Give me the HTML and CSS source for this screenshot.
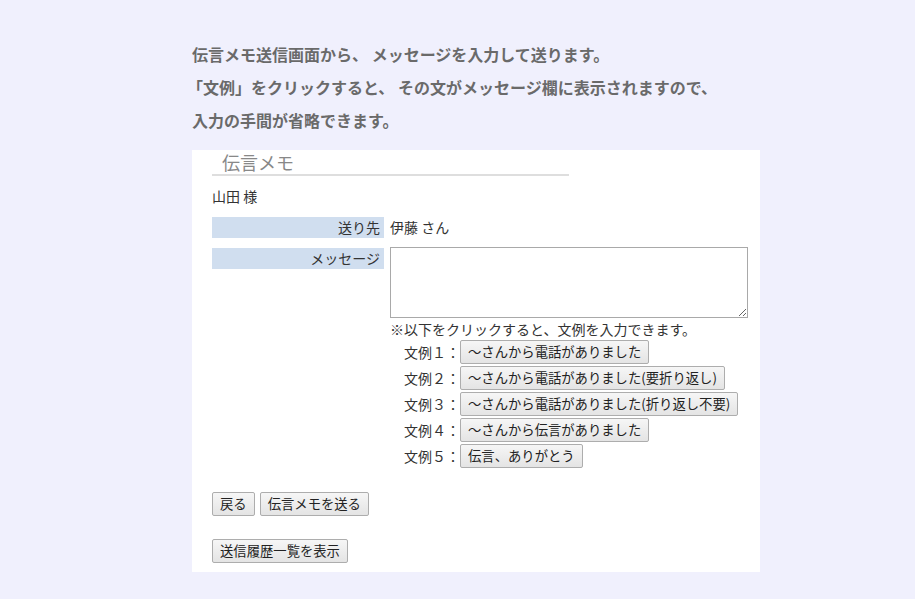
FILE: index.html
```html
<!DOCTYPE html>
<html lang="ja">
<head>
<meta charset="utf-8">
<link rel="stylesheet" href="styles.css">
</head>
<body>
<div class="page">
  <div class="intro">
    <p>伝言メモ送信画面から、 メッセージを入力して送ります。</p>
    <p class="bracket">「文例」をクリックすると、 その文がメッセージ欄に表示されますので、</p>
    <p>入力の手間が省略できます。</p>
  </div>
  <div class="card">
    <div class="title">伝言メモ</div>
    <div class="user">山田 様</div>
    <div class="row">
      <div class="label">送り先</div>
      <div class="value">伊藤 さん</div>
    </div>
    <div class="row msg">
      <div class="label">メッセージ</div>
      <div class="field">
        <textarea class="ta"></textarea>
        <div class="note">※以下をクリックすると、文例を入力できます。</div>
        <div class="examples">
          <div class="ex"><span class="exlabel">文例１：</span><button class="btn">～さんから電話がありました</button></div>
          <div class="ex"><span class="exlabel">文例２：</span><button class="btn">～さんから電話がありました(要折り返し)</button></div>
          <div class="ex"><span class="exlabel">文例３：</span><button class="btn">～さんから電話がありました(折り返し不要)</button></div>
          <div class="ex"><span class="exlabel">文例４：</span><button class="btn">～さんから伝言がありました</button></div>
          <div class="ex"><span class="exlabel">文例５：</span><button class="btn">伝言、ありがとう</button></div>
        </div>
      </div>
    </div>
    <div class="actions">
      <button class="btn">戻る</button>
      <button class="btn">伝言メモを送る</button>
    </div>
    <div class="actions history">
      <button class="btn">送信履歴一覧を表示</button>
    </div>
  </div>
</div>
</body>
</html>
```
FILE: styles.css
```css
html, body {
  margin: 0;
  padding: 0;
  background: #f0f0fd;
}
body {
  font-family: "Noto Sans CJK JP", "Noto Sans", sans-serif;
  color: #333;
}
.page {
  padding: 38px 0 0 192px;
}
.intro p {
  margin: 0;
  font-size: 16px;
  line-height: 33px;
  font-weight: bold;
  color: #6a6a6a;
  white-space: nowrap;
}
.intro .bracket {
  margin-left: -5px;
}
.intro {
  margin-bottom: 13px;
}
.card {
  width: 568px;
  box-sizing: border-box;
  background: #fff;
  padding: 0 20px 9px 20px;
}
.title {
  width: 357px;
  box-sizing: border-box;
  padding-left: 10px;
  font-size: 18px;
  line-height: 24px;
  color: #888;
  border-bottom: 2px solid #dedede;
}
.user {
  margin-top: 10px;
  font-size: 14px;
  line-height: 20px;
}
.row {
  display: flex;
  margin-top: 11px;
  font-size: 14px;
  line-height: 21px;
}
.row.msg {
  margin-top: 10px;
}
.label {
  width: 172px;
  flex: none;
  height: 21px;
  background: #d0deef;
  text-align: right;
  padding-right: 4px;
  box-sizing: border-box;
}
.value {
  margin-left: 6px;
}
.field {
  margin-left: 6px;
  display: flex;
  flex-direction: column;
}
.ta {
  width: 358px;
  height: 71px;
  box-sizing: border-box;
  border: 1px solid #a9a9a9;
  margin: -1px 0 0 0;
  padding: 2px;
  display: block;
  resize: both;
  font-family: inherit;
}
.note {
  font-size: 14px;
  line-height: 20px;
  margin-top: 1px;
}
.examples {
  display: flex;
  flex-direction: column;
  gap: 2px;
  padding-left: 14px;
  margin-top: 1px;
}
.ex {
  display: flex;
  align-items: center;
}
.exlabel {
  width: 56px;
  font-size: 14px;
  line-height: 24px;
}
.btn {
  font-family: "Noto Sans CJK JP", "Noto Sans", sans-serif;
  font-size: 13.33px;
  height: 24px;
  line-height: 20px;
  padding: 0 7px;
  color: #222;
  border: 1px solid #adadad;
  border-radius: 2px;
  background: linear-gradient(#f6f6f6, #e4e4e4);
  white-space: nowrap;
}
.actions {
  display: flex;
  gap: 5px;
  margin-top: 24px;
}
.actions.history {
  margin-top: 23px;
}
```
